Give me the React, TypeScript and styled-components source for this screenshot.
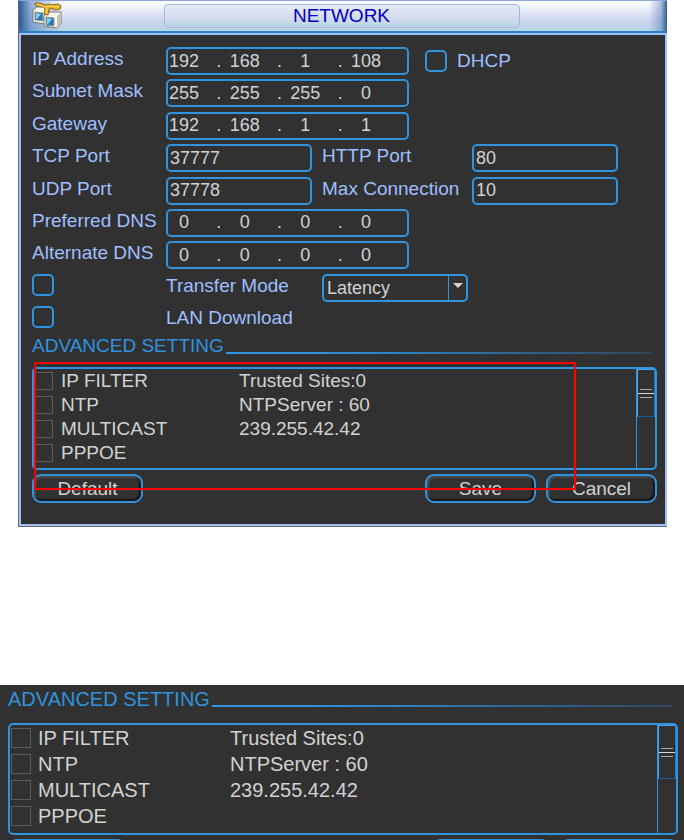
import React, { useId, useState } from 'react';
import styled, { createGlobalStyle, css } from 'styled-components';

const color = {
  panel: '#313131',
  line: '#2f93df',
  lineDim: '#24587f',
  label: '#9fbfff',
  frame: '#9fc0fb',
  text: '#d2d2d2',
  mark: '#ff0000',
};

const GlobalStyle = createGlobalStyle`
  *, *::before, *::after { box-sizing: border-box; }
  body {
    margin: 0;
    background: #ffffff;
    font-family: "Liberation Sans", Arial, sans-serif;
  }
  button, input, select { font: inherit; color: inherit; }
`;

const Page = styled.main`
  display: flex;
  flex-direction: column;
  gap: 158px;
  height: 100vh;
  overflow: hidden;
`;

const Window = styled.section`
  flex: none;
  margin: 0 17px 0 18px;
  background: ${color.panel};
  border: 1px solid #6b6b6b;
  border-top: 0;
  border-right-width: 0;
`;

const TitleBar = styled.header`
  display: grid;
  grid-template-columns: 1fr minmax(0, 356px) 1fr;
  align-items: center;
  height: 33px;
  padding: 0 3px 1px 0;
  border-top: 1px solid #8ca3de;
  border-bottom: 2px solid #2f7fc1;
  background:
    linear-gradient(90deg, #2c5b97 0, rgba(72, 118, 178, 0.55) 12px, rgba(120, 155, 205, 0) 44px),
    linear-gradient(270deg, #2c5b97 0, rgba(90, 130, 185, 0.5) 6px, rgba(120, 155, 205, 0) 18px),
    linear-gradient(180deg, #ffffff 0, #e4e9f6 35%, #ccd4ee 65%, #b7d5e7 100%);
`;

const Title = styled.h1`
  margin: 0;
  height: 24px;
  border: 1px solid #a9b5dc;
  border-radius: 4px;
  background: linear-gradient(180deg, #e3ecf5 0, #d8dcf0 50%, #b9d6e6 100%);
  color: #0000c0;
  font-size: 19px;
  font-weight: 400;
  line-height: 22px;
  text-align: center;
`;

const IconSlot = styled.span`
  display: flex;
  padding-left: 13px;
`;

const WindowBody = styled.div`
  border: 2px solid ${color.frame};
  padding: 12px 8px 21px 11px;
`;

const Form = styled.form`
  display: grid;
  align-content: space-between;
  min-height: 287px;
`;

const Row = styled.div`
  display: grid;
  grid-template-columns: 134px minmax(0, 146px) 160px minmax(0, 146px);
  align-items: start;
  height: 28px;
`;

const Label = styled.label<{ $inset?: boolean }>`
  padding-left: ${(p) => (p.$inset ? '10px' : '0')};
  color: ${color.label};
  font-size: 19px;
  line-height: 24px;
  white-space: nowrap;
`;

const box = css`
  height: 28px;
  border: 2px solid ${color.line};
  border-radius: 5px;
  background: transparent;
  color: ${color.text};
  font-size: 18px;
`;

const TextField = styled.input`
  ${box}
  width: 100%;
  padding: 0 2px;
  outline: none;
`;

const WideCell = styled.div`
  grid-column: 2 / -1;
  display: flex;
  align-items: center;
  gap: 16px;
`;

const AddressBox = styled.div`
  ${box}
  display: flex;
  align-items: center;
  width: 243px;
  padding-right: 25px;
`;

const Octet = styled.input`
  width: 32px;
  padding: 0;
  border: 0;
  outline: none;
  background: transparent;
  text-align: center;
`;

const Dot = styled.span`
  flex: 1;
  padding-left: 9px;
  text-align: center;
`;

const Tick = styled.input`
  appearance: none;
  flex: none;
  width: 22px;
  height: 22px;
  margin: 0;
  border: 2px solid ${color.line};
  border-radius: 5px;
  &:checked { box-shadow: inset 0 0 0 4px ${color.panel}; background: ${color.line}; }
`;

const DhcpOption = styled.div`
  display: flex;
  align-items: center;
`;

const SelectBox = styled.div`
  display: grid;
  grid-template-columns: minmax(0, 1fr) 20px;
  align-items: center;
  margin-left: 10px;
  width: 146px;
`;

const Select = styled.select`
  ${box}
  grid-area: 1 / 1 / 2 / 3;
  appearance: none;
  width: 100%;
  padding: 0 22px 0 3px;
  outline: none;
  option { background: ${color.panel}; }
`;

const SelectArrow = styled.span`
  grid-area: 1 / 2;
  display: flex;
  align-items: center;
  justify-content: center;
  height: 26px;
  padding: 0 2px 3px 0;
  border-left: 1px solid ${color.line};
  pointer-events: none;
`;

const Heading = styled.h2<{ $large?: boolean }>`
  display: flex;
  margin: 0;
  padding-right: 6px;
  color: ${color.line};
  font-size: ${(p) => (p.$large ? '20px' : '19px')};
  font-weight: 400;
  line-height: 24px;
  white-space: nowrap;
  &::after {
    content: '';
    flex: 1;
    align-self: flex-end;
    height: 2px;
    margin: 0 0 4px 2px;
    background: linear-gradient(90deg, ${color.line} 0, ${color.line} 20%, #2f4860 100%);
  }
`;

const Marked = styled.div`
  position: relative;
  margin-top: 9px;
`;

const Highlight = styled.span`
  position: absolute;
  top: -5px;
  right: 81px;
  bottom: 13px;
  left: 2px;
  border: 2px solid ${color.mark};
  pointer-events: none;
`;

const ListFrame = styled.div<{ $large?: boolean }>`
  display: grid;
  grid-template-columns: minmax(0, 1fr) 19px;
  height: ${(p) => (p.$large ? '112px' : '103px')};
  border: 2px solid ${color.line};
  border-radius: 5px;
`;

const List = styled.ul<{ $large?: boolean }>`
  margin: 0;
  padding: 0 0 0 1px;
  list-style: none;
  color: ${color.text};
  font-size: ${(p) => (p.$large ? '20px' : '19px')};
`;

const Item = styled.li<{ $large?: boolean }>`
  display: grid;
  grid-template-columns: ${(p) => (p.$large ? '27px 192px 1fr' : '26px 178px 1fr')};
  align-items: center;
  height: ${(p) => (p.$large ? '26px' : '24px')};
  line-height: 24px;
  white-space: nowrap;
`;

const ItemTick = styled.input<{ $large?: boolean }>`
  appearance: none;
  width: ${(p) => (p.$large ? '20px' : '18px')};
  height: ${(p) => (p.$large ? '20px' : '18px')};
  margin: 0;
  border: 1px solid #5c5c5c;
  &:checked { background: ${color.lineDim}; }
`;

const Track = styled.div`
  border-left: 1px solid ${color.line};
`;

const Thumb = styled.div<{ $large?: boolean }>`
  display: flex;
  flex-direction: column;
  align-items: center;
  justify-content: center;
  gap: 3px;
  height: ${(p) => (p.$large ? '54px' : '48px')};
  border: 1px solid #4aa6f0;
  border-right-color: #1f7cc6;
  border-bottom-color: #185c94;
`;

const Grip = styled.span<{ $wide?: boolean }>`
  width: ${(p) => (p.$wide ? '100%' : '12px')};
  height: 1px;
  background: ${(p) => (p.$wide ? '#d8d8d8' : '#a8a8a8')};
`;

const Actions = styled.div`
  display: flex;
  gap: 10px;
  margin-top: 4px;
`;

const Button = styled.button<{ $start?: boolean; $large?: boolean }>`
  width: ${(p) => (p.$large ? '118px' : '111px')};
  height: 29px;
  margin-right: ${(p) => (p.$start ? 'auto' : '0')};
  padding: 0;
  border: 2px solid ${color.line};
  border-radius: 9px;
  background: ${color.panel};
  box-shadow: inset -2px -2px 1px #171717, inset 2px 2px 1px #484848;
  color: ${color.text};
  font-size: 19px;
  line-height: 24px;
`;

const Detail = styled.section`
  flex: 1;
  min-height: 0;
  overflow: hidden;
  padding: 2px 6px 0 8px;
  background: ${color.panel};
`;

const DetailBody = styled.div`
  margin-top: 12px;
`;

function NetworkIcon() {
  return (
    <svg width="30" height="27" viewBox="0 0 30 27" aria-hidden="true">
      <path d="m1 8 4-3h12v13l-4 4-12-2z" fill="#f7f7ee" stroke="#77776f" />
      <path d="m13 9 4-3v12l-4 4z" fill="#c2c2b4" />
      <path d="m3 10 8 1v8l-8-1z" fill="#2a76b4" stroke="#8f9792" />
      <path d="m4 11 5 1-4 5H4z" fill="#7fd4ee" />
      <path d="m12 14 4-4h13v12l-4 4-13-2z" fill="#f7f7ee" stroke="#77776f" />
      <path d="m25 14 4-3v11l-4 4z" fill="#c2c2b4" />
      <path d="m14 15 8 1v8l-8-1z" fill="#2a76b4" stroke="#8f9792" />
      <path d="m15 16 5 1-4 5h-1z" fill="#7fd4ee" />
      <path d="M3 1h5l5 2 4-1 3 1 6-1 3 2-1 3-4 1-6-2-1 2-1 5-4-1 1-5-2-2-5-1-3-1z" fill="#f0b51e" stroke="#8a641b" />
      <path d="m4 2 9 3 5-1 9 1M15 6l-1 5" fill="none" stroke="#ffe15a" />
    </svg>
  );
}

function Address({ label, id, value }: { label: string; id: string; value: string[] }) {
  return (
    <AddressBox role="group" aria-label={label}>
      {value.map((part, i) => (
        <React.Fragment key={i}>
          {i > 0 && <Dot>.</Dot>}
          <Octet id={i === 0 ? id : undefined} aria-label={`${label} ${i + 1}`} defaultValue={part} maxLength={3} />
        </React.Fragment>
      ))}
    </AddressBox>
  );
}

function AddressRow({ label, value, children }: { label: string; value: string; children?: React.ReactNode }) {
  const id = useId();
  return (
    <Row>
      <Label htmlFor={id}>{label}</Label>
      <WideCell>
        <Address label={label} id={id} value={value.split('.')} />
        {children}
      </WideCell>
    </Row>
  );
}

function PairRow({ fields }: { fields: [string, string][] }) {
  const id = useId();
  return (
    <Row>
      {fields.map(([label, value], i) => (
        <React.Fragment key={label}>
          <Label htmlFor={id + i} $inset={i > 0}>{label}</Label>
          <TextField id={id + i} defaultValue={value} />
        </React.Fragment>
      ))}
    </Row>
  );
}

const services = [
  { name: 'IP FILTER', value: 'Trusted Sites:0' },
  { name: 'NTP', value: 'NTPServer : 60' },
  { name: 'MULTICAST', value: '239.255.42.42' },
  { name: 'PPPOE', value: '' },
];

function ServiceList({ large }: { large?: boolean }) {
  const id = useId();
  return (
    <ListFrame $large={large}>
      <List $large={large}>
        {services.map((s) => (
          <Item key={s.name} $large={large}>
            <ItemTick type="checkbox" id={id + s.name} $large={large} />
            <label htmlFor={id + s.name}>{s.name}</label>
            <span>{s.value}</span>
          </Item>
        ))}
      </List>
      <Track>
        <Thumb $large={large}>
          <Grip />
          <Grip $wide />
          <Grip />
        </Thumb>
      </Track>
    </ListFrame>
  );
}

const actions = ['Default', 'Save', 'Cancel'];

function ActionBar({ large }: { large?: boolean }) {
  return (
    <Actions>
      {actions.map((name, i) => (
        <Button key={name} type="button" aria-label={name} $start={i === 0} $large={large}>
          {large ? null : name}
        </Button>
      ))}
    </Actions>
  );
}

export default function App() {
  const [mode, setMode] = useState('Latency');
  return (
    <>
      <GlobalStyle />
      <Page>
        <Window>
          <TitleBar>
            <IconSlot><NetworkIcon /></IconSlot>
            <Title>NETWORK</Title>
          </TitleBar>
          <WindowBody>
            <Form>
              <AddressRow label="IP Address" value="192.168.1.108">
                <DhcpOption>
                  <Tick type="checkbox" id="dhcp" />
                  <Label htmlFor="dhcp" $inset>DHCP</Label>
                </DhcpOption>
              </AddressRow>
              <AddressRow label="Subnet Mask" value="255.255.255.0" />
              <AddressRow label="Gateway" value="192.168.1.1" />
              <PairRow fields={[['TCP Port', '37777'], ['HTTP Port', '80']]} />
              <PairRow fields={[['UDP Port', '37778'], ['Max Connection', '10']]} />
              <AddressRow label="Preferred DNS" value="0.0.0.0" />
              <AddressRow label="Alternate DNS" value="0.0.0.0" />
              <Row>
                <Tick type="checkbox" id="transfer" />
                <Label htmlFor="transfer">Transfer Mode</Label>
                <SelectBox>
                  <Select aria-label="Transfer Mode" value={mode} onChange={(e) => setMode(e.target.value)}>
                    <option>Latency</option>
                  </Select>
                  <SelectArrow>
                    <svg width="10" height="6" viewBox="0 0 10 6" aria-hidden="true">
                      <path d="M0 0h10L5 5z" fill="#d2d2d2" />
                    </svg>
                  </SelectArrow>
                </SelectBox>
              </Row>
              <Row>
                <Tick type="checkbox" id="lan" />
                <Label htmlFor="lan">LAN Download</Label>
              </Row>
            </Form>
            <Heading>ADVANCED SETTING</Heading>
            <Marked>
              <ServiceList />
              <ActionBar />
              <Highlight />
            </Marked>
          </WindowBody>
        </Window>
        <Detail>
          <Heading $large>ADVANCED SETTING</Heading>
          <DetailBody>
            <ServiceList large />
            <ActionBar large />
          </DetailBody>
        </Detail>
      </Page>
    </>
  );
}
